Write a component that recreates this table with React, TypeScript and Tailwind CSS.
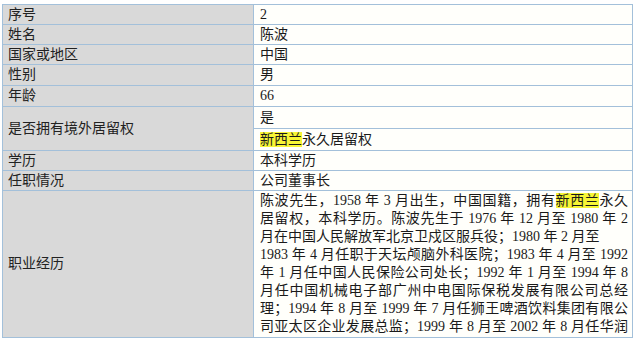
import React from "react";

const font = { fontFamily: '"Liberation Serif", "Noto Sans CJK SC", serif' };

const L = ({ children, rowSpan }: { children: React.ReactNode; rowSpan?: boolean }) => (
  <div
    className={`bg-[#d9d9d9] pl-[5px] flex items-center text-[14px] leading-[16px] text-[#222] ${rowSpan ? "row-span-2" : ""}`}
  >
    {children}
  </div>
);

const R = ({ children }: { children: React.ReactNode }) => (
  <div className="bg-[#fffffb] pl-[6px] flex items-center text-[14px] leading-[16px] text-[#1a1a1a]">
    {children}
  </div>
);

const HL = ({ children }: { children: React.ReactNode }) => (
  <span className="bg-[#f7f536]">{children}</span>
);

const Line = ({ children, full = true }: { children: React.ReactNode; full?: boolean }) => (
  <div className={`h-[18px] leading-[18px] whitespace-nowrap ${full ? "text-justify [text-align-last:justify]" : ""}`}>
    {children}
  </div>
);

export default function App() {
  return (
    <div className="w-[640px] h-[347px] bg-white overflow-hidden" style={font}>
      <div className="ml-[2px] mt-[4px] w-[631px] grid grid-cols-[250px_378px] grid-rows-[19px_19px_19px_20px_20px_21px_21px_19px_19px_146px] gap-px p-px bg-[#a3c0da]">
        <L>序号</L>
        <R>2</R>
        <L>姓名</L>
        <R>陈波</R>
        <L>国家或地区</L>
        <R>中国</R>
        <L>性别</L>
        <R>男</R>
        <L>年龄</L>
        <R>66</R>
        <L rowSpan>是否拥有境外居留权</L>
        <R>是</R>
        <R>
          <span>
            <HL>新西兰</HL>永久居留权
          </span>
        </R>
        <L>学历</L>
        <R>本科学历</R>
        <L>任职情况</L>
        <R>公司董事长</R>
        <L>职业经历</L>
        <div className="bg-[#fffffb] pl-[6px] pr-[4px] pt-px text-[14px] text-[#1a1a1a] overflow-hidden">
          <Line>
            陈波先生，1958 年 3 月出生，中国国籍，拥有<HL>新西兰</HL>永久
          </Line>
          <Line>居留权，本科学历。陈波先生于 1976 年 12 月至 1980 年 2</Line>
          <Line full={false}>月在中国人民解放军北京卫戍区服兵役；1980 年 2 月至</Line>
          <Line>1983 年 4 月任职于天坛颅脑外科医院；1983 年 4 月至 1992</Line>
          <Line>年 1 月任中国人民保险公司处长；1992 年 1 月至 1994 年 8</Line>
          <Line>月任中国机械电子部广州中电国际保税发展有限公司总经</Line>
          <Line>理；1994 年 8 月至 1999 年 7 月任狮王啤酒饮料集团有限公</Line>
          <Line>司亚太区企业发展总监；1999 年 8 月至 2002 年 8 月任华润</Line>
        </div>
      </div>
    </div>
  );
}
